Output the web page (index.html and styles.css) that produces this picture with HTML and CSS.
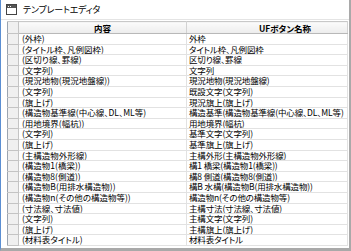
FILE: index.html
```html
<!DOCTYPE html>
<html lang="ja">
<head>
<meta charset="utf-8">
<link rel="stylesheet" href="styles.css">
</head>
<body>
<div class="window">
  <div class="titlebar">
    <svg class="appicon" width="11" height="11" viewBox="0 0 11 11">
      <rect x="0.5" y="0.5" width="10" height="10" fill="#fff" stroke="#444"/>
      <rect x="1" y="1" width="9" height="3" fill="#555"/>
      <rect x="2" y="2" width="1" height="1" fill="#fff"/>
      <rect x="4" y="2" width="1" height="1" fill="#fff"/>
    </svg>
    <span class="title">テンプレートエディタ</span>
  </div>
  <div class="client">
    <table class="grid">
      <colgroup><col class="c0"><col class="c1"><col class="c2"></colgroup>
      <thead>
        <tr><th class="rh"></th><th class="h1">内容</th><th class="h2">UFボタン名称</th></tr>
      </thead>
      <tbody>
        <tr><td class="rh"></td><td>(外枠)</td><td>外枠</td></tr>
        <tr><td class="rh"></td><td>(タイトル枠、凡例図枠)</td><td>タイトル枠、凡例図枠</td></tr>
        <tr><td class="rh"></td><td>(区切り線、罫線)</td><td>区切り線、罫線</td></tr>
        <tr><td class="rh"></td><td>(文字列)</td><td>文字列</td></tr>
        <tr><td class="rh"></td><td>(現況地物(現況地盤線))</td><td>現況地物(現況地盤線)</td></tr>
        <tr><td class="rh"></td><td>(文字列)</td><td>既設文字(文字列)</td></tr>
        <tr><td class="rh"></td><td>(旗上げ)</td><td>現況旗上(旗上げ)</td></tr>
        <tr><td class="rh"></td><td>(構造物基準線(中心線、DL、ML等)</td><td>構造基準(構造物基準線(中心線、DL、ML等)</td></tr>
        <tr><td class="rh"></td><td>(用地境界(幅杭))</td><td>用地境界(幅杭)</td></tr>
        <tr><td class="rh"></td><td>(文字列)</td><td>基準文字(文字列)</td></tr>
        <tr><td class="rh"></td><td>(旗上げ)</td><td>基準旗上(旗上げ)</td></tr>
        <tr><td class="rh"></td><td>(主構造物外形線)</td><td>主構外形(主構造物外形線)</td></tr>
        <tr><td class="rh"></td><td>(構造物1(橋梁))</td><td>構1 橋梁(構造物1(橋梁))</td></tr>
        <tr><td class="rh"></td><td>(構造物8(側道))</td><td>構8 側道(構造物8(側道))</td></tr>
        <tr><td class="rh"></td><td>(構造物B(用排水構造物))</td><td>構B 水構(構造物B(用排水構造物))</td></tr>
        <tr><td class="rh"></td><td>(構造物n(その他の構造物等))</td><td>構造物n(その他の構造物等)</td></tr>
        <tr><td class="rh"></td><td>(寸法線、寸法値)</td><td>主構寸法(寸法線、寸法値)</td></tr>
        <tr><td class="rh"></td><td>(文字列)</td><td>主構文字(文字列)</td></tr>
        <tr><td class="rh"></td><td>(旗上げ)</td><td>主構旗上(旗上げ)</td></tr>
        <tr><td class="rh"></td><td>(材料表タイトル)</td><td>材料表タイトル</td></tr>
      </tbody>
    </table>
  </div>
</div>
</body>
</html>
```

FILE: styles.css
```css
html, body {
  margin: 0;
  padding: 0;
  background: #fff;
}
body {
  width: 351px;
  height: 251px;
  overflow: hidden;
  font-family: "Noto Sans CJK JP", "Liberation Sans", sans-serif;
  font-feature-settings: "palt";
  color: #000;
}
.window {
  box-sizing: border-box;
  width: 351px;
  height: 251px;
  border-left: 1px solid #5a8ed2;
  border-right: 2px solid #a9a9a9;
  border-bottom: 3px solid #a9a9a9;
  display: flex;
  flex-direction: column;
}
.titlebar {
  height: 20px;
  display: flex;
  align-items: center;
  padding-left: 5px;
  gap: 6px;
  border-bottom: 1px solid #e4e4e4;
  box-sizing: border-box;
}
.appicon { display: block; }
.title {
  font-size: 9px;
  line-height: 10px;
  letter-spacing: -0.2px;
}
.client {
  flex: 1;
  padding: 1px 0 0 6px;
  background: #fff;
}
.grid {
  border-collapse: collapse;
  table-layout: fixed;
  width: 340px;
  font-size: 8.5px;
  border-left: 1px solid #9aa4b0;
  border-top: 1px solid #c8c8c8;
}
.c0 { width: 11px; }
.c1 { width: 168px; }
.c2 { width: 161px; }
.grid th {
  height: 11px;
  padding: 0;
  font-weight: bold;
  background: linear-gradient(#fbfbfb, #ececec);
  border-right: 1px solid #d2d2d2;
  border-bottom: 1px solid #b8b8b8;
  line-height: 10px;
  white-space: nowrap;
  overflow: hidden;
}
.grid th.h1 { text-align: center; }
.grid th.h2 { text-align: center; padding-left: 36px; }
.grid td {
  height: 9.6px;
  padding: 0 0 0 3px;
  line-height: 9.6px;
  border-right: 1px solid #e2e2e2;
  border-bottom: 1px solid #e2e2e2;
  white-space: nowrap;
  overflow: hidden;
}
.grid td + td + td {
  padding-left: 2px;
  letter-spacing: -0.15px;
}
.grid .rh {
  background: #f0f0f0;
  border-right: 1px solid #c4c4c4;
  border-bottom: 1px solid #c4c4c4;
  padding: 0;
}
```
